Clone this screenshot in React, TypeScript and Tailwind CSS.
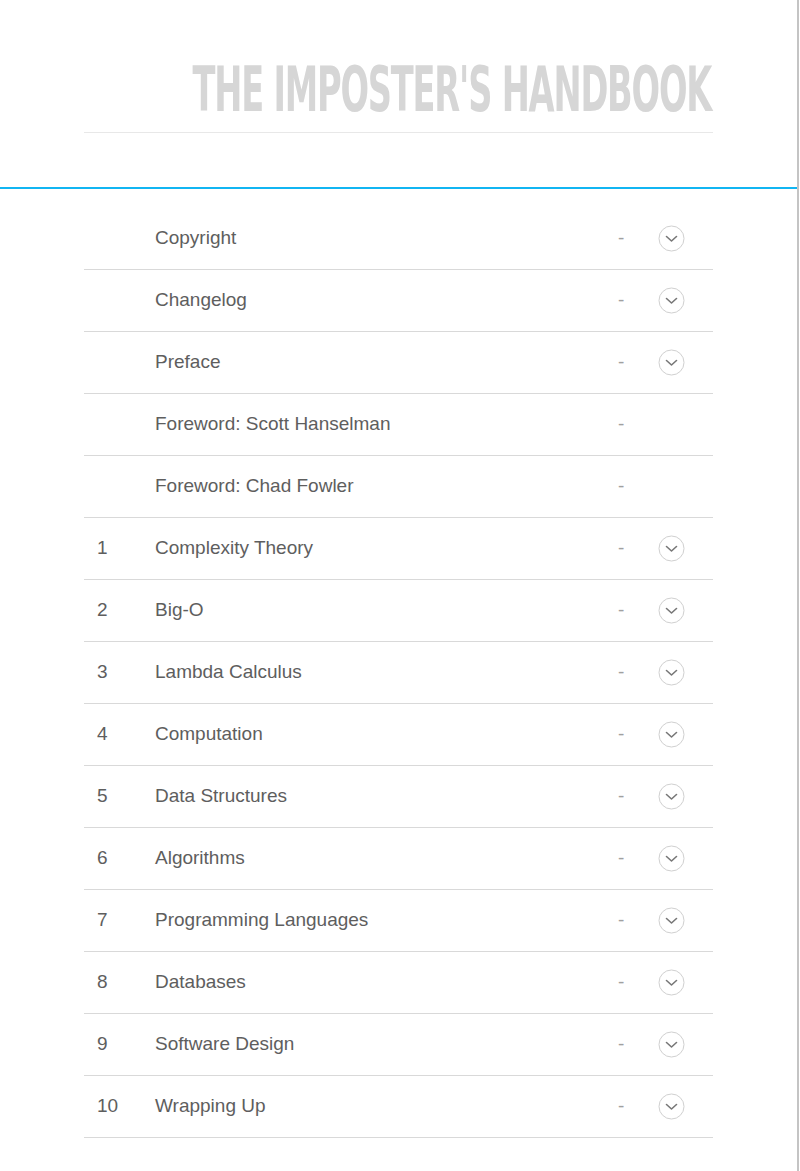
const chapters = [
  { num: "", title: "Copyright", more: true },
  { num: "", title: "Changelog", more: true },
  { num: "", title: "Preface", more: true },
  { num: "", title: "Foreword: Scott Hanselman", more: false },
  { num: "", title: "Foreword: Chad Fowler", more: false },
  { num: "1", title: "Complexity Theory", more: true },
  { num: "2", title: "Big-O", more: true },
  { num: "3", title: "Lambda Calculus", more: true },
  { num: "4", title: "Computation", more: true },
  { num: "5", title: "Data Structures", more: true },
  { num: "6", title: "Algorithms", more: true },
  { num: "7", title: "Programming Languages", more: true },
  { num: "8", title: "Databases", more: true },
  { num: "9", title: "Software Design", more: true },
  { num: "10", title: "Wrapping Up", more: true },
];

const ChevronCircle = () => (
  <svg width="27" height="27" viewBox="0 0 27 27" fill="none">
    <circle cx="13.5" cy="13.5" r="12.5" stroke="#d0d0d0" strokeWidth="1" />
    <path d="M8.5 11.5 L13.5 16 L18.5 11.5" stroke="#777" strokeWidth="1.6" strokeLinecap="round" strokeLinejoin="round" />
  </svg>
);

const App = () => {
  return (
    <div className="w-[799px] min-h-[1171px] border-r-2 border-[#c4c4c4] bg-white font-['Liberation_Sans',Arial,sans-serif]">
      {/* Header */}
      <div className="ml-[84px] w-[629px] border-b border-[#e8e8e8] pt-[62px] pb-[14px] flex justify-end">
        <h1 className="text-[#d6d6d6] font-bold text-[62px] leading-[56px] uppercase font-['DejaVu_Sans_Condensed','Liberation_Sans_Narrow',sans-serif] tracking-[-2px] origin-right scale-x-[0.603] mr-[2px] whitespace-nowrap">
          The Imposter's Handbook
        </h1>
      </div>

      <div className="mt-[54px] h-[2px] bg-[#11b5f2]" />

      {/* Table of contents */}
      <div className="ml-[84px] w-[629px] mt-[19px]">
        {chapters.map((c) => (
          <div key={c.title} className="flex items-center h-[62px] border-b border-[#d9d9d9] text-[19px] text-[#5e5e5e]">
            <div className="w-[71px] pl-[13px]">{c.num}</div>
            <div className="flex-1">{c.title}</div>
            <div className="w-[26px] text-[#a0a0a0]">-</div>
            <div className="w-[69px] pl-[14px] flex items-center">
              {c.more && <ChevronCircle />}
            </div>
          </div>
        ))}
      </div>
    </div>
  );
};

export default App;
